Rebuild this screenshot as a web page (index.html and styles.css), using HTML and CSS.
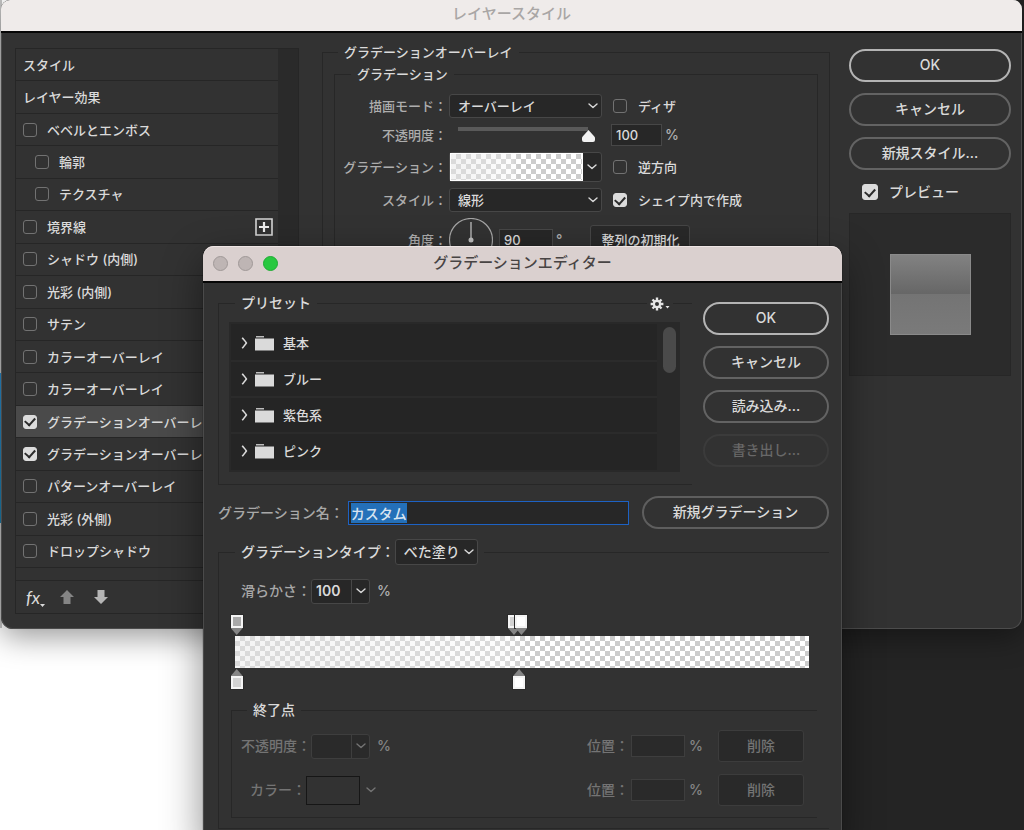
FILE: index.html
```html
<!DOCTYPE html>
<html lang="ja">
<head>
<meta charset="utf-8">
<title>レイヤースタイル</title>
<link rel="stylesheet" href="styles.css">
</head>
<body>
<svg class="symbols" aria-hidden="true">
  <symbol id="chevron" viewBox="0 0 10 6"><path d="M1 1l4 3.6L9 1" fill="none" stroke="currentColor" stroke-width="1.4" stroke-linecap="round" stroke-linejoin="round"/></symbol>
  <symbol id="expand" viewBox="0 0 7 12"><path d="M1.2 .8C3 3 4.500 4.500 5.400 6 4.500 7.500 3 9 1.200 11.200" fill="none" stroke="currentColor" stroke-width="1.5"/></symbol>
  <symbol id="folder" viewBox="0 0 19 15"><path d="M1 0h8v1.500H1z" fill="#bdbdbd"/><path d="M0 2.500h19v12H0z" fill="currentColor"/></symbol>
  <symbol id="arrow-up" viewBox="0 0 14 14"><path d="M7 0l7 7h-3.500v7h-7V7H0z" fill="currentColor"/></symbol>
  <symbol id="arrow-down" viewBox="0 0 14 14"><path d="M3.500 0h7v7H14l-7 7-7-7h3.500z" fill="currentColor"/></symbol>
</svg>
<main class="desktop">
  <section class="window style-window">
    <header class="titlebar">レイヤースタイル</header>
    <div class="style-body">
      <div class="effects-panel">
        <div class="effects-scroll">
          <ul class="effects">
            <li>スタイル</li>
            <li>レイヤー効果</li>
            <li><label><input type="checkbox">ベベルとエンボス</label></li>
            <li class="nested"><label><input type="checkbox">輪郭</label></li>
            <li class="nested"><label><input type="checkbox">テクスチャ</label></li>
            <li><label><input type="checkbox">境界線</label>
              <button class="add" aria-label="追加"><svg width="18" height="18" viewBox="0 0 18 18"><path d="M1 1h16v16H1z" fill="none" stroke="#d6d6d6" stroke-width="1.600"/><path d="M9 4v10M4 9h10" stroke="#eee" stroke-width="2.200"/></svg></button></li>
            <li><label><input type="checkbox">シャドウ (内側)</label></li>
            <li><label><input type="checkbox">光彩 (内側)</label></li>
            <li><label><input type="checkbox">サテン</label></li>
            <li><label><input type="checkbox">カラーオーバーレイ</label></li>
            <li><label><input type="checkbox">カラーオーバーレイ</label></li>
            <li class="selected"><label><input type="checkbox" checked>グラデーションオーバーレイ</label></li>
            <li><label><input type="checkbox" checked>グラデーションオーバーレイ</label></li>
            <li><label><input type="checkbox">パターンオーバーレイ</label></li>
            <li><label><input type="checkbox">光彩 (外側)</label></li>
            <li><label><input type="checkbox">ドロップシャドウ</label></li>
          </ul>
        </div>
        <div class="effects-tools">
          <button class="fx" aria-label="fx">fx<svg width="5" height="3" viewBox="0 0 5 3"><path d="M0 0h5L2.500 3z" fill="currentColor"/></svg></button>
          <button class="up" aria-label="上へ"><svg width="14" height="14"><use href="#arrow-up"/></svg></button>
          <button class="down" aria-label="下へ"><svg width="14" height="14"><use href="#arrow-down"/></svg></button>
        </div>
      </div>

      <fieldset class="overlay-group">
        <legend>グラデーションオーバーレイ</legend>
        <fieldset class="gradient-group">
          <legend>グラデーション</legend>
          <div class="row">
            <label class="name" for="mode">描画モード：</label>
            <span class="select wide"><select id="mode"><option>オーバーレイ</option></select><svg width="10" height="6"><use href="#chevron"/></svg></span>
            <label class="check"><input type="checkbox">ディザ</label>
          </div>
          <div class="row">
            <label class="name" for="opacity">不透明度：</label>
            <span class="wide slider"><input id="opacity" type="range" min="0" max="100" value="100"></span>
            <input class="number percent" type="text" value="100" aria-label="不透明度の値"><span class="unit">%</span>
          </div>
          <div class="row">
            <span class="name">グラデーション：</span>
            <button class="wide gradient-picker" aria-label="グラデーション"><span class="checker"></span><svg width="10" height="6"><use href="#chevron"/></svg></button>
            <label class="check"><input type="checkbox">逆方向</label>
          </div>
          <div class="row">
            <label class="name" for="shape">スタイル：</label>
            <span class="select wide"><select id="shape"><option>線形</option></select><svg width="10" height="6"><use href="#chevron"/></svg></span>
            <label class="check"><input type="checkbox" checked>シェイプ内で作成</label>
          </div>
          <div class="row">
            <label class="name" for="angle">角度：</label>
            <svg class="dial" width="44" height="44" viewBox="0 0 44 44"><circle cx="22" cy="22" r="21.500" fill="none" stroke="#a5a5a5" stroke-width="1.200"/><path d="M22 4v18" stroke="#c0c0c0" stroke-width="1.300"/><circle cx="22" cy="22" r="2.500" fill="#c0c0c0"/></svg>
            <input id="angle" class="number" type="text" value="90"><span class="unit">°</span>
            <button class="flat align">整列の初期化</button>
          </div>
        </fieldset>
      </fieldset>

      <div class="actions">
        <button class="pill primary">OK</button>
        <button class="pill">キャンセル</button>
        <button class="pill">新規スタイル...</button>
        <label class="check preview-check"><input type="checkbox" checked>プレビュー</label>
        <div class="preview"><div class="swatch"></div></div>
      </div>
    </div>
  </section>

  <section class="window editor-window">
    <header class="titlebar"><span class="lights"><i></i><i></i><i class="zoom"></i></span>グラデーションエディター</header>
    <div class="editor-body">
      <div class="editor-top">
        <fieldset class="presets">
          <legend>プリセット</legend>
          <button class="gear" aria-label="設定"><svg width="20" height="14" viewBox="0 0 20 14"><g stroke="#e6e6e6" stroke-width="2.400"><path d="M7 .6v12.800M.6 7h12.800M2.500 2.500l9 9M11.500 2.500l-9 9"/></g><circle cx="7" cy="7" r="4.200" fill="#e6e6e6"/><circle cx="7" cy="7" r="2" fill="#323232"/><path d="M15.500 9h4l-2 2.600z" fill="#e6e6e6"/></svg></button>
          <div class="preset-box">
            <ul>
              <li><svg width="7" height="12"><use href="#expand"/></svg><svg width="19" height="15"><use href="#folder"/></svg>基本</li>
              <li><svg width="7" height="12"><use href="#expand"/></svg><svg width="19" height="15"><use href="#folder"/></svg>ブルー</li>
              <li><svg width="7" height="12"><use href="#expand"/></svg><svg width="19" height="15"><use href="#folder"/></svg>紫色系</li>
              <li><svg width="7" height="12"><use href="#expand"/></svg><svg width="19" height="15"><use href="#folder"/></svg>ピンク</li>
            </ul>
            <div class="scroll"><div class="thumb"></div></div>
          </div>
        </fieldset>
        <div class="editor-actions">
          <button class="pill primary">OK</button>
          <button class="pill">キャンセル</button>
          <button class="pill">読み込み...</button>
          <button class="pill" disabled>書き出し...</button>
        </div>
      </div>

      <div class="name-row">
        <label for="gradient-name">グラデーション名：</label>
        <input id="gradient-name" type="text" value="カスタム">
        <button class="pill">新規グラデーション</button>
      </div>

      <fieldset class="type-group">
        <legend><label for="type">グラデーションタイプ：</label><span class="select"><select id="type"><option>べた塗り</option></select><svg width="10" height="6"><use href="#chevron"/></svg></span></legend>
        <div class="field">
          <label class="name" for="smooth">滑らかさ：</label>
          <span class="combo"><input id="smooth" type="text" value="100"><button aria-label="滑らかさの一覧"><svg width="10" height="6"><use href="#chevron"/></svg></button></span>
          <span class="unit">%</span>
        </div>
        <div class="ramp">
          <div class="stops">
            <span class="stop" style="left:0.3%"><i style="background:#a9a9a9"></i></span>
            <span class="stop" style="left:48.6%"><i style="background:#d2d2d2"></i></span>
            <span class="stop" style="left:49.9%"><i style="background:#fff"></i></span>
          </div>
          <div class="checker"></div>
          <div class="stops below">
            <span class="stop" style="left:0.3%"><i style="background:#d2d2d2"></i></span>
            <span class="stop" style="left:49.5%"><i style="background:#fff"></i></span>
          </div>
        </div>
        <fieldset class="end-group">
          <legend>終了点</legend>
          <div class="field disabled">
            <label class="name" for="stop-opacity">不透明度：</label>
            <span class="combo"><input id="stop-opacity" type="text" disabled><button disabled aria-label="不透明度の一覧"><svg width="10" height="6"><use href="#chevron"/></svg></button></span>
            <span class="unit">%</span>
            <label class="position" for="pos1">位置：</label><input id="pos1" class="number" type="text" disabled><span class="unit">%</span>
            <button class="flat" disabled>削除</button>
          </div>
          <div class="field disabled">
            <span class="name color-name">カラー：</span>
            <button class="color" disabled aria-label="カラー"></button>
            <svg width="10" height="6"><use href="#chevron"/></svg>
            <label class="position" for="pos2">位置：</label><input id="pos2" class="number" type="text" disabled><span class="unit">%</span>
            <button class="flat" disabled>削除</button>
          </div>
        </fieldset>
      </fieldset>
    </div>
  </section>
</main>
<script src="script.js"></script>
</body>
</html>
```
FILE: styles.css
```css
* { box-sizing: border-box; }

body {
  margin: 0;
  font: 500 13px/20px Inter, "Noto Sans CJK JP", sans-serif;
  color: #dadada;
}

button, input, select {
  margin: 0;
  padding: 0;
  border: 0;
  background: none;
  font: inherit;
  color: inherit;
}

fieldset { margin: 0; min-width: 0; border: 1px solid #272727; }
legend { padding: 0 6px; white-space: nowrap; }
ul { margin: 0; padding: 0; list-style: none; }
svg { flex: none; display: block; }
label, button { white-space: nowrap; }
.symbols { display: none; }

.desktop {
  position: relative;
  height: 100vh;
  overflow: hidden;
  background:
    linear-gradient(#2a8bcb, #1d7ba8) 0 373px / 2px 150px no-repeat,
    linear-gradient(#c4c4c4, #c4c4c4) 0 0 / 2px 628px no-repeat,
    linear-gradient(90deg, #fff 50%, #242424 50%);
}

/* windows */
.window { position: absolute; background: #323232; }

.titlebar {
  display: flex;
  align-items: center;
  justify-content: center;
  position: relative;
  border-bottom: 2px solid #060606;
  font-size: 15px;
}

.style-window {
  top: 0;
  left: 1px;
  right: 2px;
  border-radius: 9px 9px 12px 12px;
  box-shadow: inset 0 0 0 1px #4c4c4c, 0 8px 30px rgba(0, 0, 0, .4);
}

.style-window .titlebar {
  height: 33px;
  padding-bottom: 4px;
  border-radius: 9px 9px 0 0;
  background: #efebea;
  color: #a9a6a5;
}

.editor-window {
  top: 246px;
  left: 203px;
  right: 182px;
  border-radius: 11px 11px 0 0;
  box-shadow: inset 0 0 0 1px #4a4a4a, 0 0 1px #000, 0 14px 40px rgba(0, 0, 0, .45);
}

.editor-window .titlebar {
  height: 37px;
  padding-bottom: 1px;
  border-radius: 11px 11px 0 0;
  background: #dad0cf;
  color: #484444;
  box-shadow: inset 0 1px #eee5e4;
}

.lights { position: absolute; left: 10px; display: flex; gap: 10px; }
.lights i { width: 15px; height: 15px; border: 1px solid #a09998; border-radius: 50%; background: #beb5b4; }
.lights .zoom { border-color: #1eac33; background: #28c840; }

/* shared controls */
input[type="checkbox"] {
  appearance: none;
  display: grid;
  place-content: center;
  flex: none;
  width: 14px;
  height: 14px;
  border: 1px solid #727272;
  border-radius: 3px;
}

input[type="checkbox"]:checked { border-color: #dcdcdc; background: #dcdcdc; }

input[type="checkbox"]:checked::before {
  content: "";
  width: 8px;
  height: 5px;
  margin-bottom: 2px;
  border: solid #2b2b2b;
  border-width: 0 0 2px 2px;
  transform: rotate(-48deg);
}

.pill {
  height: 33px;
  padding: 0 12px 2px;
  border: 2px solid #636363;
  border-radius: 17px;
  font-size: 14px;
}

.pill.primary { border-color: #b4b4b4; }
.pill:disabled { border-color: #3b3b3b; color: #686868; }

.flat {
  width: 86px;
  height: 32px;
  border: 1px solid #464646;
  border-radius: 3px;
  background: #292929;
}

.select { display: inline-grid; align-items: center; }
.select > * { grid-area: 1 / 1; }

.select select {
  appearance: none;
  width: 100%;
  height: 24px;
  padding: 0 24px 0 8px;
  border: 1px solid #474747;
  border-radius: 3px;
  background: #272727;
}

.select svg { justify-self: end; margin-right: 4px; pointer-events: none; }

.number {
  width: 54px;
  height: 22px;
  padding: 0 4px;
  border: 1px solid #474747;
  background: #272727;
}

.unit { color: #b0b0b0; font-size: 14px; }

.checker {
  background:
    linear-gradient(90deg, rgba(232, 232, 232, .5), rgba(250, 250, 250, .3) 47%, rgba(255, 255, 255, 0) 51%),
    repeating-conic-gradient(#ccc 0 25%, #fff 0 50%) 0 0 / 10px 10px;
}

/* layer style window */
.style-body { display: flex; padding: 9px 11px 15px 14px; }

.effects-panel {
  display: flex;
  flex-direction: column;
  width: 284px;
  margin: 6px 23px 0 0;
  border: 1px solid #262626;
}

.effects-scroll { padding: 0 20px 12px 0; border-bottom: 1px solid #262626; background: linear-gradient(90deg, transparent 262px, #2a2a2a 262px); }
.effects { display: grid; grid-auto-rows: 1fr; min-height: 519px; }
.effects li { display: flex; align-items: center; justify-content: space-between; padding: 0 5px 0 7px; border-bottom: 1px solid #262626; white-space: nowrap; }
.effects label { display: flex; align-items: center; gap: 10px; }
.effects .nested { padding-left: 19px; }
.effects .selected { background: #4a4a4a; }

.effects-tools { display: flex; align-items: center; gap: 14px; height: 32px; padding-left: 10px; }
.fx { display: flex; align-items: flex-end; width: 20px; font: italic 400 18px/20px Lato, sans-serif; }
.up { color: #858585; }
.down { margin-left: 6px; color: #b5b5b5; }

.overlay-group { flex: 1; padding: 2px 11px 11px; }
.overlay-group > legend { margin-left: 4px; }
.gradient-group { display: grid; gap: 6px; padding: 10px 0; }
.gradient-group > legend { margin-left: 16px; }

.row { display: flex; align-items: center; }
.row .name { width: 112px; margin-right: 2px; text-align: right; color: #adadad; }
.row .wide { width: 153px; margin-right: 11px; }
.row .unit { margin-left: 3px; }
.check { display: flex; align-items: center; gap: 11px; }

.row .slider { align-self: flex-start; margin-right: 9px; padding: 0 7px 0 9px; }
.slider input { appearance: none; display: block; width: 100%; height: 10px; }
.slider input::-webkit-slider-runnable-track { height: 4px; background: linear-gradient(90deg, #5a5a5a 130px, transparent 130px); }
.slider input::-webkit-slider-thumb {
  appearance: none;
  width: 13px;
  height: 12px;
  margin-top: 3px;
  border-radius: 2px;
  background: #f2f2f2;
  clip-path: polygon(50% 0, 100% 60%, 100% 100%, 0 100%, 0 60%);
}
.percent { width: 51px; }

.gradient-picker { display: flex; align-items: center; justify-content: space-between; height: 30px; padding-right: 4px; border: 1px solid #474747; border-radius: 3px; background: #272727; }
.gradient-picker .checker { flex: 1; height: 28px; margin-right: 4px; border: 1px solid #fff; }
.dial { margin-right: 6px; }
.align { width: 100px; margin-left: 28px; height: 30px; }

.actions { display: flex; flex-direction: column; gap: 11px; width: 162px; margin: 7px 0 0 19px; }
.preview-check { margin: 1px 0 0 13px; font-size: 14px; }
.preview-check input { width: 16px; height: 16px; }
.preview { display: grid; place-items: center; height: 163px; border: 1px solid #272727; background: #2b2b2b; }
.swatch { width: 81px; height: 81px; border: 1px solid #8a8a8a; background: linear-gradient(#828282, #666 50%, #747474 50%, #7a7a7a); }

/* gradient editor window */
.editor-body { display: flex; flex-direction: column; padding: 10px 13px 14px 15px; font-size: 14px; }
.editor-top { display: flex; gap: 11px; }

.presets { position: relative; flex: 1; padding: 9px 12px 12px 10px; border-right: 0; }
.presets > legend { margin-left: 6px; }
.gear { position: absolute; top: -16px; right: 19px; padding: 0 3px; background: #323232; }
.preset-box { display: flex; height: 150px; border: 2px solid #292929; background: #252525; font-size: 13px; }
.preset-box ul { flex: 1; padding-top: 2px; }
.preset-box li { display: flex; align-items: center; height: 36px; padding-left: 10px; border-bottom: 2px solid #2b2b2b; }
.preset-box li:last-child { border-bottom-color: transparent; }
.preset-box li svg + svg { margin: 0 9px 0 7px; }
.scroll { width: 21px; padding: 3px 2px 0 6px; background: #292929; }
.thumb { height: 46px; border-radius: 7px; background: #4a4a4a; }

.editor-actions { display: flex; flex-direction: column; gap: 11px; width: 126px; margin-top: 9px; }

.name-row { display: flex; align-items: center; margin: 11px 0 10px; }
.name-row label { color: #a8a8a8; }
.name-row input { flex: 1; min-width: 0; height: 24px; margin: 0 13px 0 4px; padding: 0 2px; border: 1px solid #1d62c4; outline: 0; background: #272727; }
.name-row input::selection { background: #2470b9; color: #d8e4f0; }
.name-row .pill { width: 187px; border-color: #5e5e5e; }

.type-group { padding: 13px 12px 10px; border-right: 0; }
.type-group > legend { display: flex; align-items: center; height: 26px; margin-left: 4px; }
.type-group .select select { width: 83px; height: 26px; padding-right: 18px; }

.field { display: flex; align-items: center; min-height: 26px; }
.field .name { width: 80px; text-align: right; color: #a8a8a8; }
.field .unit { margin-left: 7px; }
.combo { display: flex; width: 59px; height: 25px; border: 1px solid #474747; border-radius: 3px; background: #272727; }
.combo input { flex: 1; min-width: 0; padding: 0 4px; font-weight: 600; }
.combo button { display: grid; place-items: center; width: 18px; border-left: 1px solid #474747; }

.ramp { margin: 11px 8px 11px 4px; }
.ramp .checker { height: 32px; }
.stops { position: relative; height: 21px; }
.stop { position: absolute; top: 0; width: 12px; height: 20px; margin-left: -6px; }
.stop i { display: block; width: 12px; height: 13px; border: 2px solid #f4f4f4; outline: 1px solid #2a2a2a; }
.stop::after { content: ""; display: block; height: 7px; background: #858585; clip-path: polygon(0 0, 100% 0, 50% 100%); }
.below .stop { top: 1px; display: flex; flex-direction: column-reverse; }
.below .stop::after { clip-path: polygon(50% 0, 100% 100%, 0 100%); }

.end-group { display: grid; gap: 12px; padding: 10px 13px 11px 0; border-right: 0; }
.end-group > legend { margin-left: 15px; }
.disabled, .disabled .name { color: #747474; }
.disabled .combo, .disabled .combo button, .disabled .number { border-color: #3e3e3e; }
.disabled .combo, .disabled .number { background: #2a2a2a; }
.disabled .unit { color: #858585; }
.disabled .name { width: 79px; }
.disabled .position { margin-left: auto; }
.disabled .position + .number { margin-left: 2px; }
.disabled .number + .unit { margin-left: 4px; }
.disabled .flat { margin-left: 15px; border-color: #3c3c3c; }
.disabled .color-name { width: 74px; }
.color { width: 54px; height: 29px; margin-right: 6px; border: 1px solid #161616; }
```
FILE: script.js
```js
const nameInput = document.getElementById("gradient-name");
nameInput.focus();
nameInput.select();
```
